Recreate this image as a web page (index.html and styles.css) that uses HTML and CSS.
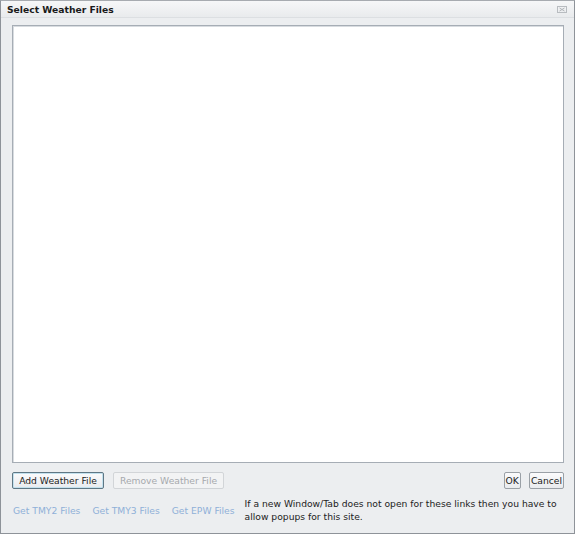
FILE: index.html
```html
<!DOCTYPE html>
<html>
<head>
<meta charset="utf-8">
<link rel="stylesheet" href="styles.css">
</head>
<body>
<div class="dialog">
  <div class="titlebar">
    <span class="title">Select Weather Files</span>
    <span class="close" aria-label="Close">
      <svg width="10" height="7" viewBox="0 0 10 7"><rect x="0.5" y="0.5" width="9" height="6" fill="none" stroke="#b8bcc0"/><path d="M2.5 2 L7.5 5 M7.5 2 L2.5 5" stroke="#b0b4b8" stroke-width="1"/></svg>
    </span>
  </div>
  <div class="body">
    <div class="listbox"></div>
    <div class="buttons">
      <button class="btn primary">Add Weather File</button>
      <button class="btn disabled">Remove Weather File</button>
      <span class="spacer"></span>
      <button class="btn small">OK</button>
      <button class="btn small">Cancel</button>
    </div>
    <div class="footer">
      <a class="link">Get TMY2 Files</a>
      <a class="link">Get TMY3 Files</a>
      <a class="link last">Get EPW Files</a>
      <p class="note">If a new Window/Tab does not open for these links then you have to allow popups for this site.</p>
    </div>
  </div>
</div>
</body>
</html>
```
FILE: styles.css
```css
html, body {
  margin: 0;
  padding: 0;
  background: #ffffff;
}
.dialog {
  width: 575px;
  height: 534px;
  box-sizing: border-box;
  border: 1px solid #8e9399;
  border-top-color: #a7abb0;
  background: #eceef0;
  display: flex;
  flex-direction: column;
  font-family: "DejaVu Sans", Verdana, sans-serif;
  font-size: 9.2px;
  color: #222;
}
.titlebar {
  height: 16px;
  display: flex;
  align-items: center;
  justify-content: space-between;
  padding: 0 6px 0 6px;
  background: linear-gradient(#f6f7f8, #e9ebed);
  border-bottom: 1px solid #dcdfe2;
}
.title {
  font-weight: bold;
  font-size: 9.2px;
  color: #1a1a1a;
}
.close {
  display: flex;
  margin-right: 1px;
}
.body {
  flex: 1;
  display: flex;
  flex-direction: column;
  padding: 7px 10px 0 11px;
}
.listbox {
  height: 436px;
  background: #ffffff;
  border: 1px solid #a6adb5;
  box-shadow: inset 1px 1px 0 #d8dce0;
}
.buttons {
  display: flex;
  align-items: center;
  margin-top: 9px;
  height: 17px;
}
.btn {
  font-family: inherit;
  font-size: 9.2px;
  height: 17px;
  padding: 0 6px;
  border: 1px solid #b8bcc1;
  border-radius: 2px;
  background: linear-gradient(#fbfbfc, #e9ebee);
  color: #222;
  line-height: 14px;
  margin-right: 9px;
}
.btn.primary {
  width: 92px;
  padding: 0;
  border-color: #5f7784;
  box-shadow: inset 0 0 0 1px #c3e1ee;
}
.btn.disabled {
  width: 111px;
  padding: 0;
  color: #a6a9ad;
  border-color: #d2d5d8;
  background: #f2f3f4;
}
.btn.small {
  padding: 0 1px;
  margin-right: 8px;
  border-color: #9aa0a6;
}
.btn.small:last-child {
  margin-right: 0;
}
.spacer {
  flex: 1;
}
.footer {
  display: flex;
  align-items: center;
  margin-top: 8px;
  padding-left: 1px;
}
.link {
  color: #8fb0d8;
  margin-right: 12px;
  white-space: nowrap;
}
.link.last {
  margin-right: 10px;
}
.note {
  flex: 1;
  margin: 0;
  line-height: 13px;
  color: #222;
}
```
